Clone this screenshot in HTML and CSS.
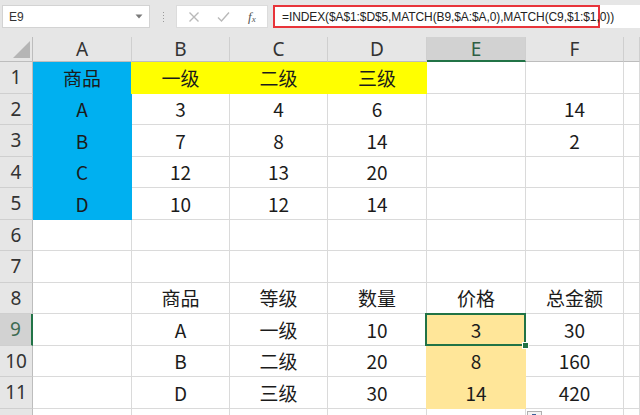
FILE: index.html
```html
<!DOCTYPE html>
<html lang="zh">
<head>
<meta charset="utf-8">
<link rel="stylesheet" href="styles.css">
</head>
<body>
<div class="app">
  <div class="topbar">
    <div class="namebox"><span>E9</span><svg class="dd" width="8" height="5" viewBox="0 0 8 5"><path d="M0.5 0.5 L7.5 0.5 L4 4.5 Z" fill="#7a7a7a"/></svg></div>
    <div class="grip"><i></i><i></i><i></i><i></i></div>
    <div class="fxbtns">
      <svg class="ic" width="12" height="12" viewBox="0 0 12 12"><path d="M1.5 1.5 L10.5 10.5 M10.5 1.5 L1.5 10.5" stroke="#b9b9b9" stroke-width="1.4" fill="none"/></svg>
      <svg class="ic" width="13" height="12" viewBox="0 0 13 12"><path d="M1 6.5 L4.5 10 L12 1.5" stroke="#b9b9b9" stroke-width="1.4" fill="none"/></svg>
      <span class="fx">f<sub>x</sub></span>
    </div>
    <div class="formula"><span class="hl">=INDEX($A$1:$D$5,MATCH(B9,$A:$A,0),MATCH(C9,$1:$1,0))</span></div>
  </div>

  <div class="sheet">
    <div class="ch corner"><svg width="17" height="17" viewBox="0 0 17 17"><path d="M17 0 L17 17 L0 17 Z" fill="#b5b5b5"/></svg></div>
    <div class="ch">A</div><div class="ch">B</div><div class="ch">C</div><div class="ch">D</div><div class="ch sel">E</div><div class="ch">F</div><div class="ch"></div>

    <div class="rh">1</div><div class="c blue">商品</div><div class="c yel">一级</div><div class="c yel">二级</div><div class="c yel">三级</div><div class="c"></div><div class="c"></div><div class="c"></div>
    <div class="rh">2</div><div class="c blue">A</div><div class="c">3</div><div class="c">4</div><div class="c">6</div><div class="c"></div><div class="c">14</div><div class="c"></div>
    <div class="rh">3</div><div class="c blue">B</div><div class="c">7</div><div class="c">8</div><div class="c">14</div><div class="c"></div><div class="c">2</div><div class="c"></div>
    <div class="rh">4</div><div class="c blue">C</div><div class="c">12</div><div class="c">13</div><div class="c">20</div><div class="c"></div><div class="c"></div><div class="c"></div>
    <div class="rh">5</div><div class="c blue">D</div><div class="c">10</div><div class="c">12</div><div class="c">14</div><div class="c"></div><div class="c"></div><div class="c"></div>
    <div class="rh">6</div><div class="c"></div><div class="c"></div><div class="c"></div><div class="c"></div><div class="c"></div><div class="c"></div><div class="c"></div>
    <div class="rh">7</div><div class="c"></div><div class="c"></div><div class="c"></div><div class="c"></div><div class="c"></div><div class="c"></div><div class="c"></div>
    <div class="rh">8</div><div class="c"></div><div class="c">商品</div><div class="c">等级</div><div class="c">数量</div><div class="c">价格</div><div class="c">总金额</div><div class="c"></div>
    <div class="rh sel">9</div><div class="c"></div><div class="c">A</div><div class="c">一级</div><div class="c">10</div><div class="c org active">3</div><div class="c">30</div><div class="c"></div>
    <div class="rh">10</div><div class="c"></div><div class="c">B</div><div class="c">二级</div><div class="c">20</div><div class="c org">8</div><div class="c">160</div><div class="c"></div>
    <div class="rh">11</div><div class="c"></div><div class="c">D</div><div class="c">三级</div><div class="c">30</div><div class="c org">14</div><div class="c">420</div><div class="c"></div>
    <div class="rh"></div><div class="c"></div><div class="c"></div><div class="c"></div><div class="c"></div><div class="c"></div><div class="c paste"><span class="pasteicon"><svg width="13" height="10" viewBox="0 0 13 10"><rect x="2" y="1" width="8" height="9" fill="#5b8fd6"/><rect x="4" y="0" width="4" height="2" fill="#3b5f9a"/></svg></span></div><div class="c"></div>
  </div>
</div>
</body>
</html>
```
FILE: styles.css
```css
html, body {
  margin: 0;
  padding: 0;
  background: #ffffff;
}
.app {
  width: 640px;
  height: 415px;
  overflow: hidden;
  font-family: "Noto Sans CJK SC", "Noto Sans", sans-serif;
}
.topbar {
  height: 37px;
  box-sizing: border-box;
  background: #e6e6e6;
  display: flex;
  align-items: flex-start;
  padding-top: 5px;
}
.namebox {
  margin-left: 2px;
  width: 148px;
  height: 23px;
  box-sizing: border-box;
  background: #fff;
  border: 1px solid #d3d3d3;
  display: flex;
  align-items: center;
  justify-content: space-between;
  padding: 0 6px 0 6px;
  font: 12px "Liberation Sans", sans-serif;
  color: #333;
}
.grip {
  width: 26px;
  height: 23px;
  display: flex;
  flex-direction: column;
  align-items: center;
  justify-content: center;
  gap: 2px;
}
.grip i {
  display: block;
  width: 1px;
  height: 1px;
  background: #9a9a9a;
}
.fxbtns {
  width: 92px;
  height: 23px;
  box-sizing: border-box;
  background: #fff;
  border: 1px solid #dcdcdc;
  display: flex;
  align-items: center;
  padding-left: 11px;
  gap: 17px;
}
.fx {
  font: italic 13px "Liberation Serif", serif;
  color: #555;
  margin-left: 1px;
}
.fx sub {
  font-size: 9px;
  vertical-align: -1px;
}
.formula {
  flex: 1;
  margin-left: 5px;
  height: 23px;
  background: #fff;
}
.hl {
  display: flex;
  align-items: center;
  width: 327px;
  height: 23px;
  box-sizing: border-box;
  border: 2px solid #e8343a;
  padding-left: 7px;
  font: 12px "Liberation Sans", sans-serif;
  letter-spacing: -0.1px;
  color: #222;
  white-space: nowrap;
}
.sheet {
  display: grid;
  grid-template-columns: 33px 99px 98px 98px 99px 99px 98px 16px;
  grid-template-rows: 25px repeat(12, 31.5px);
}
.ch {
  background: #e6e6e6;
  border-right: 1px solid #cfcfcf;
  border-bottom: 1px solid #bdbdbd;
  box-sizing: border-box;
  display: flex;
  align-items: center;
  justify-content: center;
  font: 19px "Noto Sans", sans-serif;
  color: #333;
}
.ch.corner {
  justify-content: flex-end;
  align-items: flex-end;
  padding: 0 2px 3px 0;
  border-right: 1px solid #bdbdbd;
}
.ch.sel {
  background: #d2d2d2;
  border-bottom: 2px solid #217346;
  color: #2e5e43;
}
.rh {
  background: #e6e6e6;
  border-right: 1px solid #bdbdbd;
  border-bottom: 1px solid #cfcfcf;
  box-sizing: border-box;
  display: flex;
  align-items: center;
  justify-content: center;
  font: 19px "Noto Sans", sans-serif;
  color: #333;
}
.rh.sel {
  background: #d2d2d2;
  border-right: 2px solid #217346;
  color: #3d6b52;
}
.c {
  border-right: 1px solid #dadada;
  border-bottom: 1px solid #dadada;
  box-sizing: border-box;
  display: flex;
  align-items: center;
  justify-content: center;
  font-size: 19px;
  color: #1b1b1b;
  position: relative;
}
.c.blue {
  background: #00b0f0;
  border-color: #00b0f0;
}
.c.yel {
  background: #ffff00;
  border-color: #ffff00;
  box-shadow: -1px 0 0 #ffff00;
}
.c.org {
  background: #ffe699;
  border-color: #ffe699;
  box-shadow: -1px 0 0 #ffe699;
}
.c.active::after {
  content: "";
  position: absolute;
  left: -2px;
  top: -1px;
  right: -1px;
  bottom: -1px;
  border: 2px solid #217346;
}
.c.active::before {
  content: "";
  position: absolute;
  right: -4px;
  bottom: -4px;
  width: 5px;
  height: 5px;
  background: #217346;
  border: 1px solid #fff;
  z-index: 2;
}
.pasteicon {
  position: absolute;
  left: 1px;
  top: 2px;
  width: 15px;
  height: 14px;
  box-sizing: border-box;
  background: #f3f3f3;
  border: 1px solid #b0b0b0;
  display: flex;
  justify-content: center;
  padding-top: 2px;
}
```
